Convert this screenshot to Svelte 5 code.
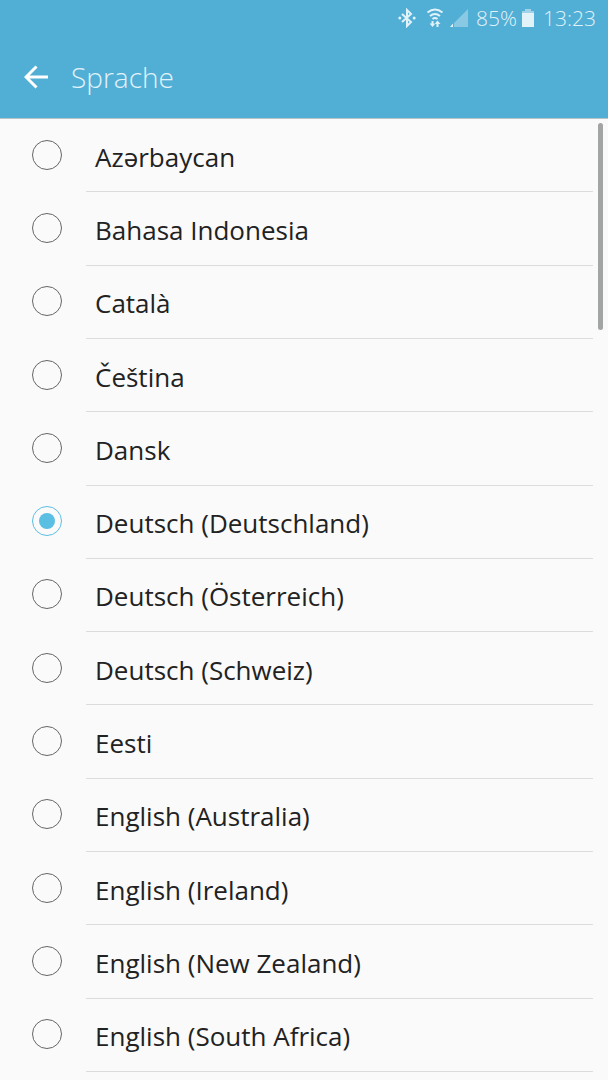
<script>
  const languages = [
    { code: 'az', name: 'Azərbaycan' },
    { code: 'id', name: 'Bahasa Indonesia' },
    { code: 'ca', name: 'Català' },
    { code: 'cs', name: 'Čeština' },
    { code: 'da', name: 'Dansk' },
    { code: 'de-DE', name: 'Deutsch (Deutschland)' },
    { code: 'de-AT', name: 'Deutsch (Österreich)' },
    { code: 'de-CH', name: 'Deutsch (Schweiz)' },
    { code: 'et', name: 'Eesti' },
    { code: 'en-AU', name: 'English (Australia)' },
    { code: 'en-IE', name: 'English (Ireland)' },
    { code: 'en-NZ', name: 'English (New Zealand)' },
    { code: 'en-ZA', name: 'English (South Africa)' }
  ];

  let selected = $state('de-DE');
</script>

<div class="screen">
  <header>
    <div class="status">
      <svg class="bluetooth" width="18" height="20" viewBox="0 0 18 20">
        <path d="M4 6l9 8-4 4V2l4 4-9 8" fill="none" stroke="currentColor" stroke-width="2" />
        <circle cx="1.800" cy="10" r="1.500" fill="currentColor" />
        <circle cx="16.200" cy="10" r="1.500" fill="currentColor" />
      </svg>
      <svg class="wifi" width="18" height="20" viewBox="0 0 18 20">
        <g fill="none" stroke="currentColor" stroke-width="2">
          <path d="M1.500 4.500Q9-1.500 16.500 4.500M4 8Q9 4 14 8M6.500 11Q9 9 11.500 11" />
          <path d="M6.500 13v4M11.500 19v-4" />
        </g>
        <path d="M3.500 15.500h6L6.500 19zM8.500 16h6l-3-3.500z" fill="currentColor" />
      </svg>
      <svg class="signal" width="18" height="18" viewBox="0 0 18 18">
        <path d="M18 0v18H4V14z" fill="currentColor" opacity="0.4" />
        <path d="M3 14.500v3.500H0z" fill="currentColor" />
      </svg>
      <span class="percent">85%</span>
      <svg class="battery" width="12" height="18" viewBox="0 0 12 18">
        <path d="M3 0h6v2h3v3H0V2h3z" fill="currentColor" opacity="0.55" />
        <path d="M0 4h12v14H0z" fill="currentColor" />
      </svg>
      <time>13:23</time>
    </div>

    <div class="bar">
      <button aria-label="Zurück">
        <svg width="24" height="24" viewBox="0 0 24 24">
          <path d="M12.500 1.500L2 12l10.500 10.500M2 12h22" fill="none" stroke="#fff" stroke-width="3" />
        </svg>
      </button>
      <h1>Sprache</h1>
    </div>
  </header>

  <main>
    <div class="list" role="radiogroup" aria-label="Sprache">
      {#each languages as lang}
        <label>
          <input type="radio" name="language" value={lang.code} bind:group={selected} />
          <span class="name">{lang.name}</span>
        </label>
      {/each}
    </div>
    <div class="scrollbar"></div>
  </main>
</div>

<style>
  :global(body) { margin: 0; background: #fafafa; }
  .screen {
    display: flex;
    flex-direction: column;
    min-height: 100vh;
    font-family: "Open Sans", "Noto Sans", sans-serif;
    color: #222;
  }

  header { background: #51aed5; border-bottom: 1px solid #b9c4c9; color: #e2f2f9; }
  .status { display: flex; align-items: center; justify-content: flex-end; height: 36px; padding-right: 12px; font-size: 21px; font-weight: 300; }
  .bluetooth { margin-right: 10px; }
  .wifi { margin-right: 6px; }
  .signal { margin-right: 8px; }
  .percent { margin-right: 5px; }
  .battery { margin-right: 9px; }

  .bar { display: flex; align-items: center; height: 82px; padding-left: 24px; }
  .bar button { display: flex; padding: 0; border: 0; background: none; cursor: pointer; }
  h1 { margin: 0 0 0 23px; font-size: 28px; font-weight: 300; }

  main { position: relative; display: flex; flex: 1; padding-bottom: 8px; }
  .list { display: grid; flex: 1; grid-auto-rows: minmax(72px, 1fr); padding-right: 15px; }
  label { display: flex; align-items: center; padding-left: 32px; cursor: pointer; }
  input {
    appearance: none;
    display: grid;
    place-items: center;
    flex: none;
    box-sizing: border-box;
    width: 30px;
    height: 30px;
    margin: 0 24px 2px 0;
    border: 1px solid #666;
    border-radius: 50%;
  }
  input:checked { border-color: #5bbfe3; }
  input:checked::before { content: ""; width: 16px; height: 16px; border-radius: 50%; background: #5bbfe3; }
  .name {
    display: flex;
    flex: 1;
    align-items: center;
    align-self: stretch;
    padding: 3px 0 0 9px;
    border-bottom: 1px solid #dcdcdc;
    font-size: 26px;
  }

  .scrollbar { position: absolute; top: 4px; right: 5px; width: 5px; height: 207px; border-radius: 3px; background: #a3a5a5; }
</style>
